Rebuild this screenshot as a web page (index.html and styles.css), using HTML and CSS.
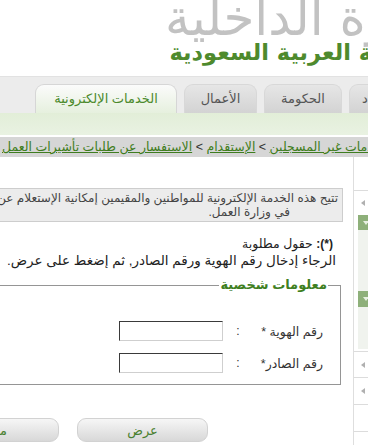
FILE: index.html
```html
<!DOCTYPE html>
<html lang="ar">
<head>
<meta charset="utf-8">
<title>الاستفسار عن طلبات تأشيرات العمل</title>
<link rel="stylesheet" href="styles.css">
</head>
<body>
<div class="page">
  <header class="masthead">
    <div class="logo-main">وزارة الداخلية</div>
    <div class="logo-sub">المملكة العربية السعودية</div>
  </header>

  <nav class="tabs">
    <div class="tab tab-edge">الأفراد</div>
    <div class="tab tab-gov">الحكومة</div>
    <div class="tab tab-biz">الأعمال</div>
    <div class="tab tab-active">الخدمات الإلكترونية</div>
  </nav>
  <div class="subnav"></div>

  <div class="crumbs">
    <div class="crumbs-inner">
      <a href="#">الرئيسية</a><span class="sep"> &gt; </span><a href="#">الخدمات الإلكترونية</a><span class="sep"> &gt; </span><a href="#">خدمات غير المسجلين</a><span class="sep"> &gt; </span><a href="#">الإستقدام</a><span class="sep"> &gt; </span><a href="#">الاستفسار عن طلبات تأشيرات العمل</a>
    </div>
  </div>

  <div class="main">
    <aside class="side">
      <div class="side-item"><span class="arrow-left"></span></div>
      <div class="side-group">
        <div class="side-head"><span class="arrow-down"></span></div>
        <div class="side-panel side-panel-a"></div>
      </div>
      <div class="side-group">
        <div class="side-head side-head-b"><span class="arrow-down"></span></div>
        <div class="side-panel side-panel-b"></div>
      </div>
      <div class="side-item side-item-b"><span class="arrow-left"></span></div>
      <div class="side-item side-item-c"><span class="arrow-left"></span></div>
      <div class="side-item side-item-d"></div>
      <div class="side-item side-item-e"></div>
    </aside>

    <section class="content">
      <div class="info">
        <div class="info-line1">تتيح هذه الخدمة الإلكترونية للمواطنين والمقيمين إمكانية الإستعلام عن طلبات تأشيرات العمل المقدمة</div>
        <div class="info-line2">في وزارة العمل.</div>
      </div>
      <p class="required"><span class="req-mark">(*):</span> حقول مطلوبة</p>
      <p class="hint">الرجاء إدخال رقم الهوية ورقم الصادر, ثم إضغط على عرض.</p>

      <fieldset class="personal">
        <legend>معلومات شخصية</legend>
        <div class="form-grid">
          <label class="lbl" for="idn">رقم الهوية *</label>
          <span class="colon">:</span>
          <input class="field" id="idn" type="text">
          <label class="lbl" for="src">رقم الصادر*</label>
          <span class="colon">:</span>
          <input class="field" id="src" type="text">
        </div>
      </fieldset>

      <div class="actions">
        <button class="btn" type="button">عرض</button>
        <button class="btn" type="button">مسح</button>
      </div>
    </section>
  </div>
</div>
</body>
</html>
```
FILE: styles.css
```css
html, body {
  margin: 0;
  padding: 0;
}
body {
  width: 368px;
  height: 445px;
  overflow: hidden;
  background: #fff;
  font-family: "Liberation Sans", "DejaVu Sans", sans-serif;
  color: #333;
}
.page {
  direction: rtl;
  width: 368px;
}

/* header */
.masthead {
  height: 76px;
  border-bottom: 1px solid #e2e2e2;
  white-space: nowrap;
  overflow: hidden;
}
.logo-main {
  font-family: "DejaVu Sans", sans-serif;
  font-size: 50px;
  line-height: 36px;
  height: 40px;
  color: #c2c2c2;
  margin-right: -84px;
}
.logo-sub {
  font-family: "DejaVu Sans", sans-serif;
  font-size: 22.5px;
  line-height: 24px;
  font-weight: bold;
  color: #4e8a2d;
  margin-right: -73px;
}

/* tabs */
.tabs {
  height: 36px;
  background: #ececec;
  display: flex;
  align-items: flex-end;
  gap: 7px;
}
.tab {
  flex-shrink: 0;
  box-sizing: border-box;
  height: 29px;
  border-radius: 9px 9px 0 0;
  background: linear-gradient(#e6e6e6, #d3d3d3);
  border: 1px solid #d8d8d8;
  border-bottom: none;
  color: #555;
  font-size: 13px;
  line-height: 28px;
  text-align: center;
  white-space: nowrap;
}
.tab-edge { width: 60px; margin-right: -41px; }
.tab-gov { width: 78px; }
.tab-biz { width: 73px; }
.tab-active {
  width: 142px;
  background: linear-gradient(#fbfbfb, #e6f0de);
  border-color: #d6d6d6;
  color: #4b8a2c;
}
.subnav {
  height: 22px;
  background: linear-gradient(#e2eed8, #e9f2e2);
  border-bottom: 2px solid #fff;
}

/* breadcrumb */
.crumbs {
  height: 20px;
  background: #d6d6d6;
  display: flex;
  justify-content: flex-end;
  padding-left: 2px;
  overflow: hidden;
}
.crumbs-inner {
  flex-shrink: 0;
  white-space: nowrap;
  font-size: 12.5px;
  line-height: 20px;
}
.crumbs a {
  color: #3f7d20;
  text-decoration: underline;
}
.sep {
  color: #333;
}

/* main */
.main {
  display: flex;
  height: 288px;
}
.side {
  flex-shrink: 0;
  width: 14px;
  border-left: 1px solid #dedede;
  padding-top: 33px;
}
.side-item {
  height: 24px;
  border-top: 1px solid #dcdcdc;
  display: flex;
  align-items: center;
  padding-right: 3px;
}
.side-group {
  margin-right: -4px;
  margin-left: 4px;
}
.side-group:first-of-type { margin-top: 1px; }
.side-head {
  height: 15px;
  background: #8eb07a;
  display: flex;
  align-items: center;
  padding-right: 3px;
}
.side-head-b { height: 16px; }
.side-panel { background: #f0f3ee; }
.side-panel-a { height: 61px; }
.side-panel-b { height: 42px; }
.side-item-b { margin-top: 2px; height: 25px; }
.side-item-c { height: 26px; }
.side-item-d { height: 26px; }
.side-item-e { height: 20px; }
.arrow-left {
  width: 0;
  height: 0;
  border-top: 3px solid transparent;
  border-bottom: 3px solid transparent;
  border-right: 4px solid #b0b0b0;
}
.arrow-down {
  width: 0;
  height: 0;
  border-left: 3px solid transparent;
  border-right: 3px solid transparent;
  border-top: 4px solid #e8f0e2;
}

.content {
  flex: 1;
  margin-left: -140px;
  padding-right: 10px;
  font-size: 12px;
}
.info {
  margin-top: 31px;
  background: #ececec;
  border: 1px solid #cdcdcd;
  padding: 2px 4px 2px 4px;
  font-size: 12px;
  line-height: 14px;
  color: #444;
}
.info-line1 { white-space: nowrap; }
.info-line2 { padding-right: 48px; }

.required {
  margin: 14px 0 0;
  padding-right: 10px;
  line-height: 16px;
  font-size: 12.5px;
  color: #222;
}
.req-mark {
  font-weight: bold;
  font-size: 12px;
}
.hint {
  margin: 1px 0 0;
  padding-right: 7px;
  line-height: 16px;
  font-size: 13.5px;
  color: #222;
  white-space: nowrap;
}

.personal {
  margin: 8px 0 0 0;
  margin-right: 2px;
  border: 1px solid #959595;
  padding: 28px 12px 11px 0;
  min-width: 0;
}
.personal legend {
  padding: 0 1px;
  font-size: 13px;
  font-weight: bold;
  color: #3f7f1f;
  line-height: 16px;
}
.form-grid {
  display: grid;
  grid-template-columns: 75px 30px 104px;
  grid-auto-rows: 20px;
  row-gap: 12px;
  align-items: center;
}
.lbl {
  padding-right: 5px;
  color: #333;
  font-size: 12.5px;
}
.colon {
  text-align: center;
  color: #333;
}
.field {
  box-sizing: border-box;
  width: 104px;
  height: 20px;
  margin: 0;
  padding: 0 3px;
  border: 1px solid;
  border-color: #3a3a3a #cfcfcf #cfcfcf #3a3a3a;
  background: #fff;
}

.actions {
  display: flex;
  gap: 18px;
  margin-top: 33px;
  padding-right: 135px;
}
.btn {
  flex-shrink: 0;
  width: 131px;
  height: 24px;
  border: 1px solid #d2d2d2;
  border-radius: 9px;
  background: linear-gradient(#f6f6f6, #d8d8d8);
  color: #4a8030;
  font-family: "DejaVu Sans", sans-serif;
  font-size: 13px;
  padding: 0;
}
```
